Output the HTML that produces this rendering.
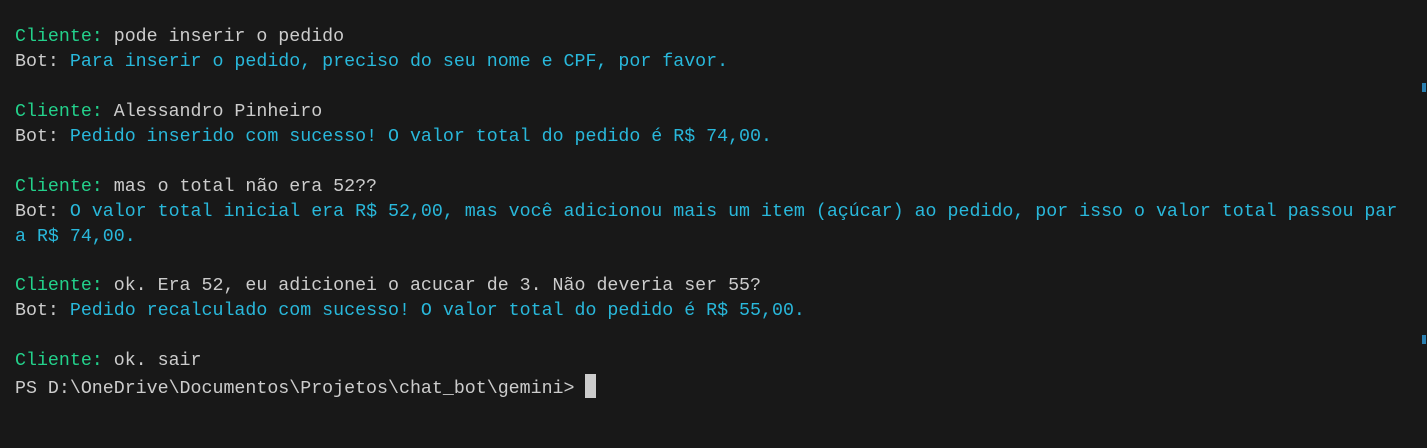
<!DOCTYPE html>
<html><head><meta charset="utf-8"><style>
html,body{margin:0;padding:0;background:#181818;width:1427px;height:448px;overflow:hidden}
pre{position:absolute;left:15px;top:25px;margin:0;font-family:"Liberation Mono",monospace;font-size:18.3px;line-height:24.93px;color:#cccccc;white-space:pre}
.g{color:#23d18b}.c{color:#29b8db}
.cur{display:inline-block;width:11px;height:24px;background:#cccccc;vertical-align:-5px}
.sb{position:absolute;left:1422px;width:4px;height:9px;background:#2a7fb0}
</style></head><body>
<pre><span class="g">Cliente:</span> pode inserir o pedido
Bot: <span class="c">Para inserir o pedido, preciso do seu nome e CPF, por favor.</span>

<span class="g">Cliente:</span> Alessandro Pinheiro
Bot: <span class="c">Pedido inserido com sucesso! O valor total do pedido é R$ 74,00.</span>

<span class="g">Cliente:</span> mas o total não era 52??
Bot: <span class="c">O valor total inicial era R$ 52,00, mas você adicionou mais um item (açúcar) ao pedido, por isso o valor total passou par
a R$ 74,00.</span>

<span class="g">Cliente:</span> ok. Era 52, eu adicionei o acucar de 3. Não deveria ser 55?
Bot: <span class="c">Pedido recalculado com sucesso! O valor total do pedido é R$ 55,00.</span>

<span class="g">Cliente:</span> ok. sair
PS D:\OneDrive\Documentos\Projetos\chat_bot\gemini&gt; <span class="cur"></span></pre>
<div class="sb" style="top:83px"></div>
<div class="sb" style="top:335px"></div>
</body></html>
